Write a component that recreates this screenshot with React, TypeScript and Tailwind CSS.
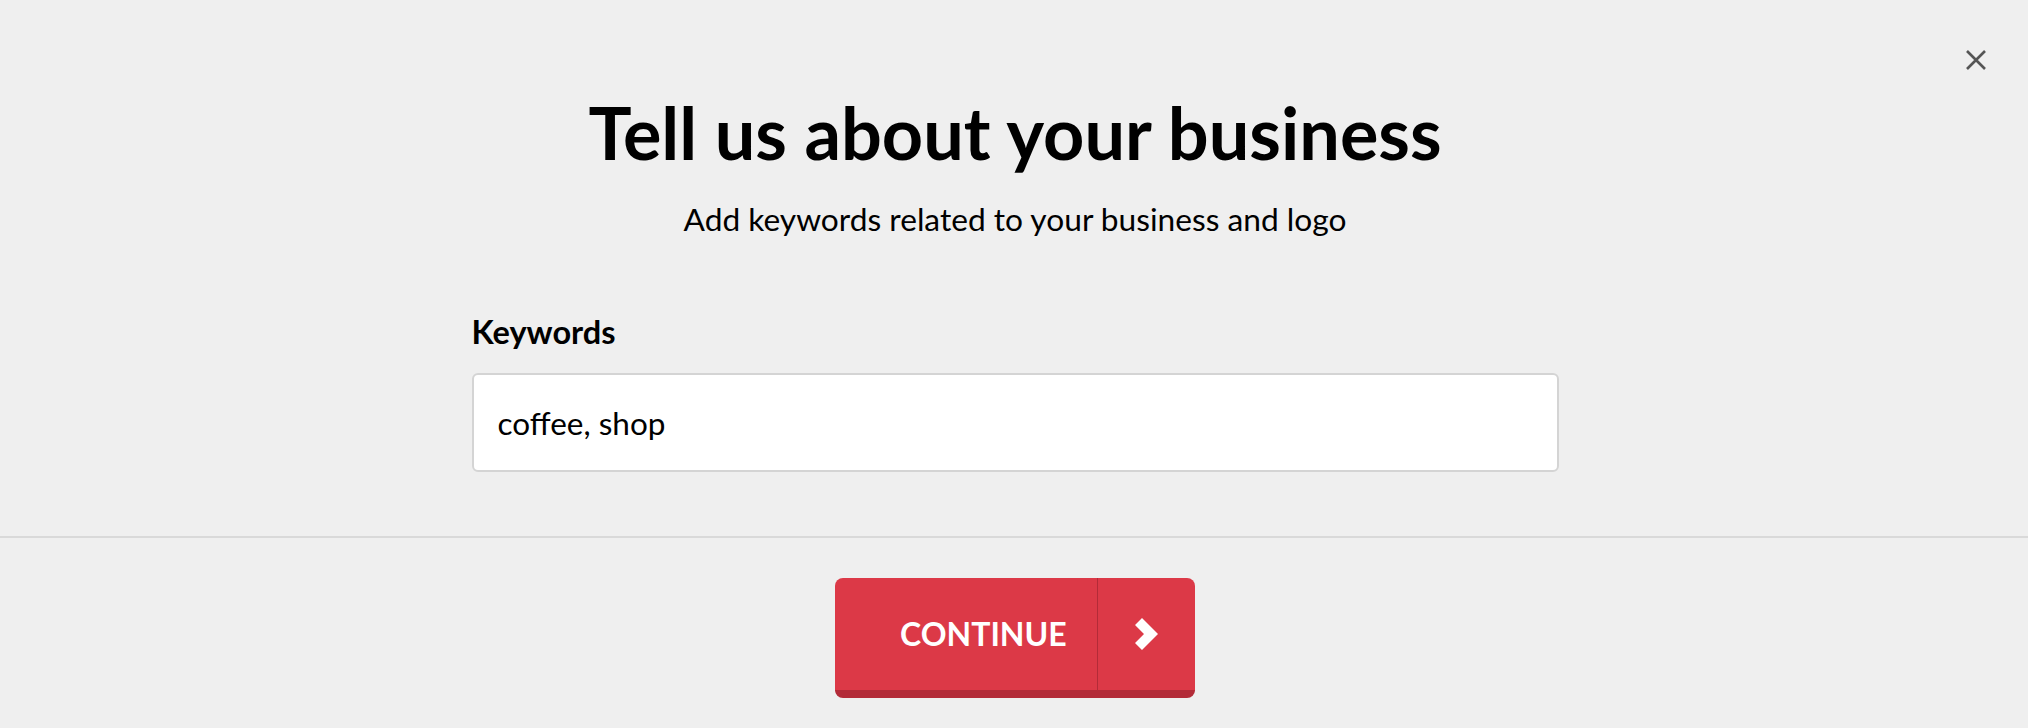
import React from "react";

export default function App() {
  return (
    <div className="relative min-h-screen w-full bg-[#efefef] font-['Lato','Noto_Sans',sans-serif] text-[#111]">
      <button className="absolute right-[42px] top-[50px] h-[20px] w-[20px]" aria-label="Close">
        <svg width="20" height="20" viewBox="0 0 20 20">
          <path d="M1 1 L19 19 M19 1 L1 19" stroke="#555" strokeWidth="2.6" strokeLinecap="butt" />
        </svg>
      </button>
      <div className="flex flex-col items-center pl-[2px] pt-[96px]">
        <h1 className="text-[72px] font-bold leading-[72px] text-black">Tell us about your business</h1>
        <p className="mt-[35px] text-[31.7px] leading-[32px] text-black">Add keywords related to your business and logo</p>
        <div className="mt-[81px] flex w-[1087px] flex-col">
          <label className="text-[32.5px] font-bold leading-[32px] text-black">Keywords</label>
          <div className="mt-[25px] flex h-[99px] items-center rounded-[6px] border-2 border-[#d4d4d4] bg-white pl-[24px]">
            <span className="text-[31.5px] leading-[32px] text-black">coffee, shop</span>
          </div>
        </div>
      </div>
      <div className="mt-[64px] h-[2px] w-full bg-[#d9d9d9]" />
      <div className="flex justify-center pl-[2px] pt-[40px]">
        <button className="flex h-[120px] w-[360px] overflow-hidden rounded-[8px] border-b-[8px] border-[#b32b38] bg-[#dc3947]">
          <span className="flex h-full w-[262px] items-center pl-[65px] text-[32px] font-bold leading-none text-white">CONTINUE</span>
          <span className="h-full w-[1px] bg-[#b32b38]" />
          <span className="flex h-full flex-1 items-center justify-center">
            <svg width="23" height="32" viewBox="0 0 23 32">
              <polygon points="0,7 7,0 23,16 7,32 0,25 9,16" fill="white" />
            </svg>
          </span>
        </button>
      </div>
    </div>
  );
}
